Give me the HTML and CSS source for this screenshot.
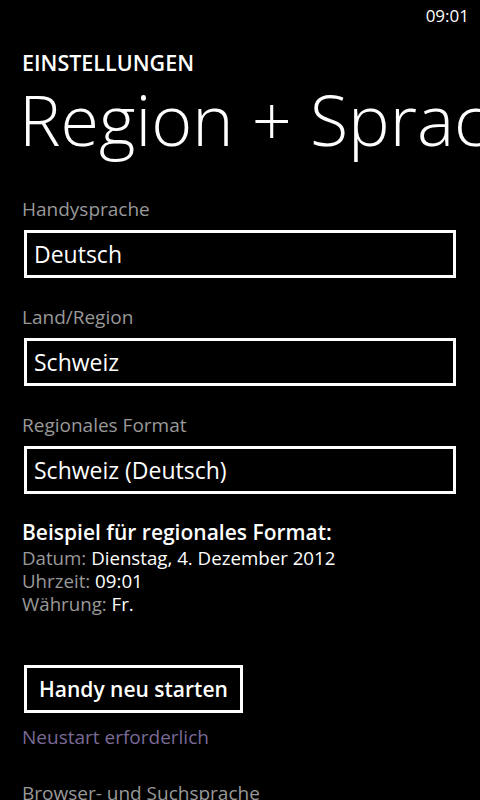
FILE: index.html
```html
<!DOCTYPE html>
<html lang="de">
  <head>
    <meta charset="UTF-8" />
    <meta name="viewport" content="width=device-width, initial-scale=1.0" />
    <title>Region + Sprache</title>
    <link rel="stylesheet" href="styles.css">
  </head>
  <body>
    <div class="status-bar">
      <span class="clock">09:01</span>
    </div>

    <div class="page">
      <div class="app-title">EINSTELLUNGEN</div>
      <h1 class="page-title">Region + Sprache</h1>

      <div class="field first">
        <div class="field-label">Handysprache</div>
        <div class="picker">Deutsch</div>
      </div>

      <div class="field">
        <div class="field-label">Land/Region</div>
        <div class="picker">Schweiz</div>
      </div>

      <div class="field">
        <div class="field-label">Regionales Format</div>
        <div class="picker">Schweiz (Deutsch)</div>
      </div>

      <div class="sample">
        <h2>Beispiel für regionales Format:</h2>
        <p><span class="muted">Datum:</span> Dienstag, 4. Dezember 2012</p>
        <p><span class="muted">Uhrzeit:</span> 09:01</p>
        <p><span class="muted">Währung:</span> Fr.</p>
      </div>

      <button type="button" class="restart-btn">Handy neu starten</button>
      <div class="hint">Neustart erforderlich</div>

      <div class="field last">
        <div class="field-label">Browser- und Suchsprache</div>
      </div>
    </div>
  </body>
</html>
```

FILE: styles.css
```css
* {
  margin: 0;
  padding: 0;
  box-sizing: border-box;
}

body {
  background-color: #000;
  color: #fff;
  font-family: "Open Sans", "Noto Sans", sans-serif;
  overflow: hidden;
  height: 800px;
}

.status-bar {
  display: flex;
  justify-content: flex-end;
  height: 32px;
  padding: 5px 11px 0 0;
}

.clock {
  font-size: 17px;
  line-height: 22px;
}

.page {
  padding-left: 22px;
  overflow: hidden;
}

.app-title {
  font-size: 21.5px;
  font-weight: 600;
  line-height: 26px;
  margin-top: 18px;
}

.page-title {
  font-size: 70px;
  font-weight: 300;
  line-height: 80px;
  white-space: nowrap;
  margin: 3px 0 0 -3px;
}

.field {
  margin-top: 26px;
}

.field.first {
  margin-top: 37px;
}

.field-label {
  color: #999;
  font-size: 19px;
  line-height: 26px;
}

.picker {
  width: 432px;
  height: 48px;
  margin: 8px 0 0 2px;
  border: 3px solid #fff;
  padding: 0 7px;
  font-size: 23px;
  line-height: 42px;
}

.sample {
  margin-top: 24px;
}

.sample h2 {
  font-size: 21px;
  font-weight: 600;
  line-height: 28px;
}

.sample p {
  font-size: 18.7px;
  line-height: 23px;
}

.muted {
  color: #999;
}

.restart-btn {
  display: block;
  margin: 50px 0 0 2px;
  height: 48px;
  padding: 0 12px;
  background-color: #000;
  color: #fff;
  border: 3px solid #fff;
  font-family: inherit;
  font-size: 21px;
  font-weight: 600;
}

.hint {
  color: #7a6a96;
  font-size: 19px;
  line-height: 26px;
  margin-top: 11px;
}

.field.last {
  margin-top: 30px;
}
```
